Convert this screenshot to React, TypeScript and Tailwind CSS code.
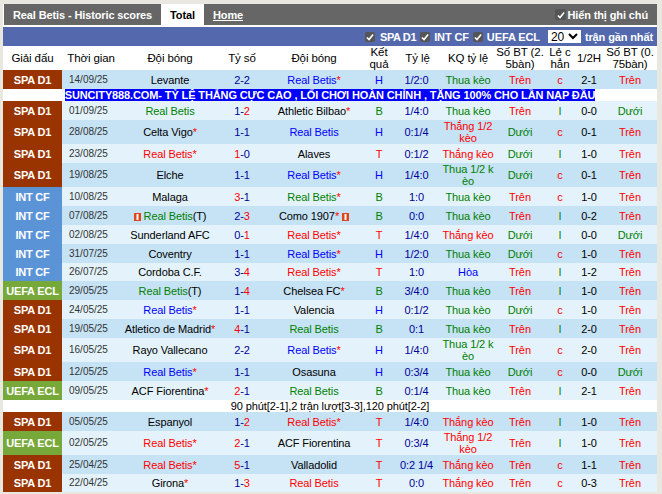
import React from "react";

type Row = {
  l: string;
  d: string;
  h: React.ReactNode;
  s: React.ReactNode;
  a: React.ReactNode;
  r: string;
  o: string;
  k: string;
  b: string;
  c: string;
  f: string;
  b2: string;
  tall?: boolean;
  short?: boolean;
};

const Flag = () => (
  <svg width="7" height="8" viewBox="0 0 7 8" className="inline-block align-[-1px]">
    <rect width="7" height="8" fill="#e0451a" />
    <rect x="2.5" y="1" width="2" height="6" fill="#fff" />
  </svg>
);

const Red = ({ t }: { t: string }) => <span className="text-[#ff0000]">{t}</span>;
const Star = () => <span className="text-[#ff0000]">*</span>;

const Team = ({ n, c, star }: { n: string; c: "blue" | "green" | "red" | "black"; star?: boolean }) => {
  const cls =
    c === "blue"
      ? "text-[#0000ff]"
      : c === "green"
        ? "text-[#008000]"
        : c === "red"
          ? "text-[#ff0000]"
          : "text-black";
  return (
    <>
      <span className={cls}>{n}</span>
      {star && <Star />}
    </>
  );
};

const Score = ({ a, b, win }: { a: string; b: string; win?: "a" | "b" }) => (
  <span className="text-[#000099]">
    {win === "a" ? <Red t={a} /> : a}-{win === "b" ? <Red t={b} /> : b}
  </span>
);

const rows: Row[] = [
  { l: "SPA D1", d: "14/09/25", h: <Team n="Levante" c="black" />, s: <Score a="2" b="2" />, a: <Team n="Real Betis" c="blue" star />, r: "H", o: "1/2:0", k: "Thua kèo", b: "Trên", c: "c", f: "2-1", b2: "Trên" },
  { l: "SPA D1", d: "01/09/25", h: <Team n="Real Betis" c="green" />, s: <Score a="1" b="2" win="b" />, a: <Team n="Athletic Bilbao" c="black" star />, r: "B", o: "1/4:0", k: "Thua kèo", b: "Trên", c: "l", f: "0-0", b2: "Dưới" },
  { l: "SPA D1", d: "28/08/25", h: <Team n="Celta Vigo" c="black" star />, s: <Score a="1" b="1" />, a: <Team n="Real Betis" c="blue" />, r: "H", o: "0:1/4", k: "Thắng 1/2 kèo", b: "Dưới", c: "c", f: "0-1", b2: "Trên", tall: true },
  { l: "SPA D1", d: "23/08/25", h: <Team n="Real Betis" c="red" star />, s: <Score a="1" b="0" win="a" />, a: <Team n="Alaves" c="black" />, r: "T", o: "0:1/2", k: "Thắng kèo", b: "Dưới", c: "l", f: "1-0", b2: "Trên" },
  { l: "SPA D1", d: "19/08/25", h: <Team n="Elche" c="black" />, s: <Score a="1" b="1" />, a: <Team n="Real Betis" c="blue" star />, r: "H", o: "1/4:0", k: "Thua 1/2 kèo", b: "Dưới", c: "c", f: "0-1", b2: "Trên", tall: true },
  { l: "INT CF", d: "10/08/25", h: <Team n="Malaga" c="black" />, s: <Score a="3" b="1" win="a" />, a: <Team n="Real Betis" c="green" star />, r: "B", o: "1:0", k: "Thua kèo", b: "Trên", c: "c", f: "1-0", b2: "Trên" },
  { l: "INT CF", d: "07/08/25", h: <><Flag /> <Team n="Real Betis" c="green" />(T)</>, s: <Score a="2" b="3" win="b" />, a: <><Team n="Como 1907" c="black" star /> <Flag /></>, r: "B", o: "0:0", k: "Thua kèo", b: "Trên", c: "l", f: "0-2", b2: "Trên" },
  { l: "INT CF", d: "02/08/25", h: <Team n="Sunderland AFC" c="black" />, s: <Score a="0" b="1" win="b" />, a: <Team n="Real Betis" c="red" star />, r: "T", o: "1/4:0", k: "Thắng kèo", b: "Dưới", c: "l", f: "0-0", b2: "Dưới" },
  { l: "INT CF", d: "31/07/25", h: <Team n="Coventry" c="black" />, s: <Score a="1" b="1" />, a: <Team n="Real Betis" c="blue" star />, r: "H", o: "1/2:0", k: "Thua kèo", b: "Dưới", c: "c", f: "1-0", b2: "Trên" },
  { l: "INT CF", d: "26/07/25", h: <Team n="Cordoba C.F." c="black" />, s: <Score a="3" b="4" win="b" />, a: <Team n="Real Betis" c="red" star />, r: "T", o: "1:0", k: "Hòa", b: "Trên", c: "l", f: "1-2", b2: "Trên", short: true },
  { l: "UEFA ECL", d: "29/05/25", h: <><Team n="Real Betis" c="green" />(T)</>, s: <Score a="1" b="4" win="b" />, a: <Team n="Chelsea FC" c="black" star />, r: "B", o: "3/4:0", k: "Thua kèo", b: "Trên", c: "l", f: "1-0", b2: "Trên" },
  { l: "SPA D1", d: "24/05/25", h: <Team n="Real Betis" c="blue" star />, s: <Score a="1" b="1" />, a: <Team n="Valencia" c="black" />, r: "H", o: "0:1/2", k: "Thua kèo", b: "Dưới", c: "c", f: "1-0", b2: "Trên" },
  { l: "SPA D1", d: "19/05/25", h: <Team n="Atletico de Madrid" c="black" star />, s: <Score a="4" b="1" win="a" />, a: <Team n="Real Betis" c="green" />, r: "B", o: "0:1", k: "Thua kèo", b: "Trên", c: "l", f: "2-0", b2: "Trên" },
  { l: "SPA D1", d: "16/05/25", h: <Team n="Rayo Vallecano" c="black" />, s: <Score a="2" b="2" />, a: <Team n="Real Betis" c="blue" star />, r: "H", o: "1/4:0", k: "Thua 1/2 kèo", b: "Trên", c: "c", f: "2-0", b2: "Trên", tall: true },
  { l: "SPA D1", d: "12/05/25", h: <Team n="Real Betis" c="blue" star />, s: <Score a="1" b="1" />, a: <Team n="Osasuna" c="black" />, r: "H", o: "0:3/4", k: "Thua kèo", b: "Dưới", c: "c", f: "0-0", b2: "Dưới" },
  { l: "UEFA ECL", d: "09/05/25", h: <Team n="ACF Fiorentina" c="black" star />, s: <Score a="2" b="1" win="a" />, a: <Team n="Real Betis" c="green" />, r: "B", o: "0:1/4", k: "Thua kèo", b: "Trên", c: "l", f: "2-1", b2: "Trên" },
  { l: "SPA D1", d: "05/05/25", h: <Team n="Espanyol" c="black" />, s: <Score a="1" b="2" win="b" />, a: <Team n="Real Betis" c="red" star />, r: "T", o: "1/4:0", k: "Thắng kèo", b: "Trên", c: "l", f: "1-0", b2: "Trên" },
  { l: "UEFA ECL", d: "02/05/25", h: <Team n="Real Betis" c="red" star />, s: <Score a="2" b="1" win="a" />, a: <Team n="ACF Fiorentina" c="black" />, r: "T", o: "0:3/4", k: "Thắng 1/2 kèo", b: "Trên", c: "l", f: "1-0", b2: "Trên", tall: true },
  { l: "SPA D1", d: "25/04/25", h: <Team n="Real Betis" c="red" star />, s: <Score a="5" b="1" win="a" />, a: <Team n="Valladolid" c="black" />, r: "T", o: "0:2 1/4", k: "Thắng kèo", b: "Trên", c: "c", f: "1-1", b2: "Trên" },
  { l: "SPA D1", d: "22/04/25", h: <Team n="Girona" c="black" star />, s: <Score a="1" b="3" win="b" />, a: <Team n="Real Betis" c="red" />, r: "T", o: "0:0", k: "Thắng kèo", b: "Trên", c: "c", f: "0-3", b2: "Trên", short: true },
];

const headers: React.ReactNode[] = [
  "Giải đấu",
  "Thời gian",
  "Đội bóng",
  "Tỷ số",
  "Đội bóng",
  <>Kết<br />quả</>,
  "Tỷ lệ",
  "KQ tỷ lệ",
  <>Số BT (2.<br />5bàn)</>,
  <>Lẻ c<br />hẳn</>,
  "1/2H",
  <>Số BT (0.<br />75bàn)</>,
];

const leagueBg = (l: string) =>
  l === "SPA D1" ? "bg-[#993300]" : l === "INT CF" ? "bg-[#5b94d6]" : "bg-[#77a83a]";

const resultColor = (r: string) =>
  r === "H" ? "text-[#0000ff]" : r === "B" ? "text-[#008000]" : "text-[#ff0000]";

const kqColor = (k: string) =>
  k.startsWith("Thua") ? "text-[#008000]" : k.startsWith("Thắng") ? "text-[#ff0000]" : "text-[#0000ff]";

const btColor = (b: string) => (b === "Trên" ? "text-[#ff0000]" : "text-[#008000]");

const Check = ({ big }: { big?: boolean }) => (
  <span className={`inline-flex items-center justify-center rounded-[2px] bg-[#555555] ${big ? "h-[11px] w-[11px]" : "h-[10px] w-[10px]"}`}>
    <svg width="8" height="8" viewBox="0 0 9 9">
      <path d="M1 5 L3.4 7.4 L8 1.6" fill="none" stroke="#fff" strokeWidth="1.8" />
    </svg>
  </span>
);

const DataRow = ({ row, odd }: { row: Row; odd: boolean }) => (
  <tr className={`${row.tall ? "h-[24px]" : row.short ? "h-[18px]" : "h-[19px]"} ${odd ? "bg-[#c6e2f5]" : "bg-[#e4f3fb]"}`}>
    <td className={`${leagueBg(row.l)} text-center font-bold tracking-[-0.2px] text-white`}>{row.l}</td>
    <td className="pl-[7px]! text-[10px] tracking-normal text-[#333333]">{row.d}</td>
    <td className="whitespace-nowrap text-center">{row.h}</td>
    <td className="text-center">{row.s}</td>
    <td className="whitespace-nowrap text-center">{row.a}</td>
    <td className={`text-center ${resultColor(row.r)}`}>{row.r}</td>
    <td className="pr-[2px]! text-center text-[#000099]">{row.o}</td>
    <td className={`break-all text-center ${kqColor(row.k)}`}>{row.k}</td>
    <td className={`text-center ${btColor(row.b)}`}>{row.b}</td>
    <td className={`text-center ${row.c === "c" ? "text-[#ff0000]" : "text-[#008000]"}`}>{row.c}</td>
    <td className="text-center text-black">{row.f}</td>
    <td className={`text-center ${btColor(row.b2)}`}>{row.b2}</td>
  </tr>
);

export default function App() {
  return (
    <div className="h-[494px] w-[662px] overflow-hidden bg-[#e8e8e1] pl-[3px] pt-[4px] font-['Liberation_Sans',Arial,sans-serif] text-[11px] leading-[12px] tracking-[-0.1px]">
      <div className="w-[654px] bg-white">
        <div className="flex h-[21px] items-stretch border-l border-white bg-[#666666] font-bold tracking-[-0.12px] text-white">
          <div className="flex w-[157px] items-center whitespace-nowrap pl-[9px]">Real Betis - Historic scores</div>
          <div className="flex w-[43px] items-center justify-center bg-white text-black">Total</div>
          <div className="flex w-[48px] items-center justify-center underline">Home</div>
          <div className="ml-auto flex items-center gap-[1px] pr-[9px]">
            <Check big />
            <span>Hiển thị ghi chú</span>
          </div>
        </div>
        <div className="mt-[2px] flex h-[19px] items-center justify-end bg-[#5469ad] pr-[4px] font-bold tracking-[-0.12px] text-white">
          <Check />
          <span className="mr-[4px] ml-[5px] tracking-[-0.4px]">SPA D1</span>
          <Check />
          <span className="mr-[4px] ml-[4px]">INT CF</span>
          <Check />
          <span className="mr-[8px] ml-[4px]">UEFA ECL</span>
          <span className="flex h-[13px] w-[33px] items-center justify-between bg-white px-[3px] text-[12px] font-normal text-black">
            20
            <svg width="10" height="7" viewBox="0 0 10 7">
              <path d="M1 1 L5 5 L9 1" fill="none" stroke="#000" strokeWidth="2" />
            </svg>
          </span>
          <span className="ml-[4px]">trận gần nhất</span>
        </div>
        <table className="w-[654px] table-fixed border-collapse [&_td]:p-0 [&_th]:p-0">
          <colgroup>
            <col className="w-[59px]" />
            <col className="w-[58px]" />
            <col className="w-[100px]" />
            <col className="w-[44px]" />
            <col className="w-[100px]" />
            <col className="w-[30px]" />
            <col className="w-[47px]" />
            <col className="w-[54px]" />
            <col className="w-[50px]" />
            <col className="w-[30px]" />
            <col className="w-[28px]" />
            <col className="w-[54px]" />
          </colgroup>
          <thead>
            <tr className="h-[24px] bg-white">
              {headers.map((h, i) => (
                <th key={i} className="whitespace-nowrap text-center text-[11.5px] font-normal text-black">
                  {h}
                </th>
              ))}
            </tr>
          </thead>
          <tbody>
            {rows.map((row, i) => (
              <React.Fragment key={row.d}>
                <DataRow row={row} odd={i % 2 === 0} />
                {i === 0 && (
                  <tr className="h-[12px] bg-white">
                    <td colSpan={12} className="text-center font-bold tracking-[-0.12px] text-white">
                      <span className="inline-block bg-[#0000ff] align-top">
                        SUNCITY888.COM- TỶ LỆ THẮNG CỰC CAO , LỐI CHƠI HOÀN CHỈNH , TẶNG 100% CHO LẦN NẠP ĐẦU
                      </span>
                    </td>
                  </tr>
                )}
                {i === 15 && (
                  <tr className="h-[12px] bg-white">
                    <td colSpan={12} className="text-center text-black">
                      90 phút[2-1],2 trận lượt[3-3],120 phút[2-2]
                    </td>
                  </tr>
                )}
              </React.Fragment>
            ))}
          </tbody>
        </table>
      </div>
    </div>
  );
}
